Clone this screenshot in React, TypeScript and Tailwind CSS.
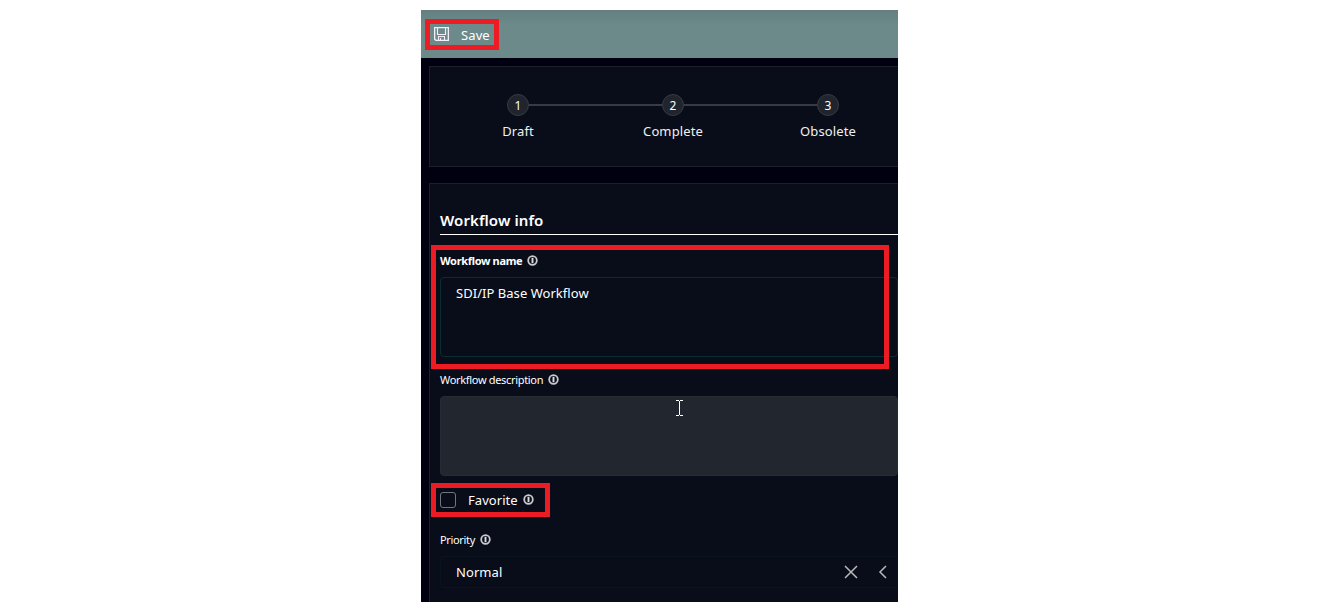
import type { ReactNode } from "react";

function InfoIcon() {
  return (
    <svg width="11" height="11" viewBox="0 0 11 11" fill="none" className="mb-[2px] shrink-0">
      <circle cx="5.5" cy="5.5" r="4.3" stroke="#c9cacd" strokeWidth="1.8" />
      <path d="M5.5 2.8V8.2" stroke="#dcdde0" strokeWidth="1.9" />
    </svg>
  );
}

function SaveIcon() {
  return (
    <svg width="15" height="14" viewBox="0 0 15 14" fill="none" stroke="#f4eefb" className="mb-px shrink-0">
      <path d="M.6 .6H14.4V13.4H2L.6 12Z" strokeWidth="1.4" />
      <path d="M3.5 .5V7.5H11.5V.5M4.5 13.5V9.5H10.5V13.5M6.5 11V13.5" strokeWidth="1.1" />
    </svg>
  );
}

function Step({ n, label }: { n: number; label: string }) {
  return (
    <div className="flex w-[22px] shrink-0 flex-col items-center">
      <div className="flex size-[22px] items-center justify-center rounded-full border border-[#373b44] bg-[#20242d] pt-[2px] text-[12px] leading-[18px] text-white">
        {n}
      </div>
      <span className="mt-[5px] whitespace-nowrap text-[13px] leading-[20px] tracking-[0.12px] text-[#f0f0f0]">{label}</span>
    </div>
  );
}

function Label({ children, className }: { children: ReactNode; className: string }) {
  return (
    <div className="flex h-4 items-center gap-[5px] leading-4 text-white">
      <span className={`whitespace-nowrap ${className}`}>{children}</span>
      <InfoIcon />
    </div>
  );
}

export default function App() {
  return (
    <div className="h-[612px] w-[1328px] overflow-hidden bg-white pl-[421px] pt-[10px] font-['Noto_Sans',sans-serif]">
      <div className="relative flex h-[592px] w-[477px] flex-col overflow-hidden bg-[#000011]">
        <header className="h-12 shrink-0 bg-linear-to-b from-[#647f80] to-[#6c8a8a] to-30% pl-[13px]">
          <button className="flex h-12 items-center gap-[12px] pt-px text-white">
            <SaveIcon />
            <span className="text-[13px] leading-5 tracking-[0.1px]">Save</span>
          </button>
        </header>

        <section className="ml-2 mt-2 flex h-[101px] shrink-0 border-y border-l border-[#1c202d] bg-[#090d1a] pl-[77px] pt-[27px]">
          <Step n={1} label="Draft" />
          <div className="mt-[10px] h-[2px] w-[133px] shrink-0 bg-[#373b44]" />
          <Step n={2} label="Complete" />
          <div className="mt-[10px] h-[2px] w-[133px] shrink-0 bg-[#373b44]" />
          <Step n={3} label="Obsolete" />
        </section>

        <section className="ml-2 mt-4 flex h-[419px] shrink-0 flex-col border-l border-t border-[#1c202d] bg-[#090d1a] pl-[10px]">
          <h2 className="mt-[25px] h-[26px] shrink-0 border-b border-white text-[15px] font-semibold leading-[23px] tracking-[0.08px] text-white">
            Workflow info
          </h2>
          <div className="mt-[18px]">
            <Label className="text-[11px] font-bold tracking-[-0.32px]">Workflow name</Label>
          </div>
          <div className="mt-2 h-20 shrink-0 rounded border border-[#0b2c31] px-[15px] pt-[5px] text-[13px] leading-5 text-white">
            <span className="tracking-[0.04px]">SDI/IP Base Workflow</span>
          </div>
          <div className="mt-[15px]">
            <Label className="text-[11px] tracking-[-0.32px]">Workflow description</Label>
          </div>
          <div className="mt-2 h-20 shrink-0 rounded border border-[#272b34] bg-[#22262f]" />
          <div className="mt-4 flex h-4 items-center gap-3">
            <div className="size-4 rounded-[3px] border border-[#71747c]" />
            <Label className="text-[13px] tracking-[0.05px]">Favorite</Label>
          </div>
          <div className="mt-6">
            <Label className="text-[11px] tracking-[-0.34px]">Priority</Label>
          </div>
          <div className="mt-2 flex h-8 shrink-0 items-center justify-between rounded border border-[#07151f] pl-[15px] pr-[10px] text-[13px] text-white">
            <span className="leading-5 tracking-[0.08px]">Normal</span>
            <div className="flex items-center gap-[20px]">
              <svg width="14" height="14" viewBox="0 0 14 14" fill="none" stroke="#b9babf" strokeWidth="1.5">
                <path d="M1 1L13 13M13 1L1 13" />
              </svg>
              <svg width="9" height="14" viewBox="0 0 9 14" fill="none" stroke="#b9babf" strokeWidth="1.5">
                <path d="M8 1L2 7L8 13" />
              </svg>
            </div>
          </div>
        </section>

        <svg width="7" height="16" viewBox="0 0 7 16" fill="none" stroke="#ffffff" className="absolute left-[255px] top-[390px]">
          <path d="M0 .5H3M4 .5H7M3.5 1V15M0 15.5H3M4 15.5H7" />
        </svg>
        <div className="absolute left-1 top-[9px] h-[31px] w-[74px] border-[5px] border-[#ed1c24]" />
        <div className="absolute left-[10px] top-[235px] h-[124px] w-[458px] border-[5px] border-[#ed1c24]" />
        <div className="absolute left-[10px] top-[473px] h-[34px] w-[119px] border-[5px] border-[#ed1c24]" />
      </div>
    </div>
  );
}
